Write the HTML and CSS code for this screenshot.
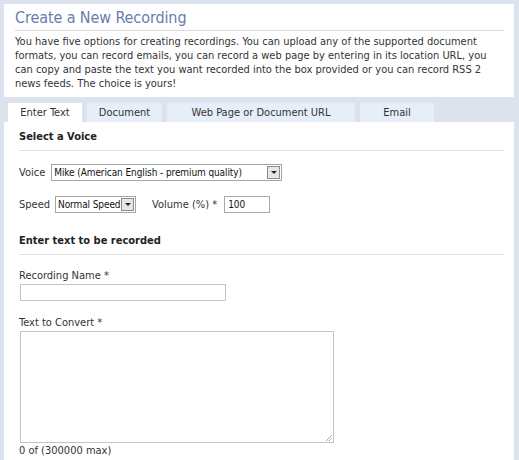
FILE: index.html
```html
<!DOCTYPE html>
<html>
<head>
<meta charset="utf-8">
<link rel="stylesheet" href="styles.css">
</head>
<body>
<div class="page">
  <section class="intro">
    <h1 class="title">Create a New Recording</h1>
    <p class="lead">You have five options for creating recordings. You can upload any of the supported document formats, you can record emails, you can record a web page by entering in its location URL, you can copy and paste the text you want recorded into the box provided or you can record RSS 2 news feeds. The choice is yours!</p>
  </section>
  <nav class="tabs">
    <div class="tab active t1">Enter Text</div>
    <div class="tab t2">Document</div>
    <div class="tab t3">Web Page or Document URL</div>
    <div class="tab t4">Email</div>
  </nav>
  <section class="panel">
    <h2 class="section-title">Select a Voice</h2>
    <div class="row voice-row">
      <span class="label">Voice</span>
      <div class="select voice-select"><span class="sel-text">Mike (American English - premium quality)</span><span class="sel-btn"><span class="tri"></span></span></div>
    </div>
    <div class="row speed-row">
      <span class="label speed-label">Speed</span>
      <div class="select speed-select"><span class="sel-text">Normal Speed</span><span class="sel-btn"><span class="tri"></span></span></div>
      <span class="label vol-label">Volume (%) *</span>
      <div class="input vol-input">100</div>
    </div>
    <h2 class="section-title second">Enter text to be recorded</h2>
    <div class="field-label name-label">Recording Name *</div>
    <div class="input name-input"></div>
    <div class="field-label text-label">Text to Convert *</div>
    <div class="textarea"><svg class="grip" width="9" height="9" viewBox="0 0 9 9"><path d="M8 2 L2 8 M8 5 L5 8" stroke="#aaa" stroke-width="1"/></svg></div>
    <div class="counter">0 of (300000 max)</div>
  </section>
</div>
</body>
</html>
```
FILE: styles.css
```css
html, body { margin: 0; padding: 0; }
body {
  background: #dce3ef;
  font-family: "DejaVu Sans Condensed", "DejaVu Sans", Verdana, sans-serif;
  font-size: 11px;
  color: #333;
  width: 519px;
  height: 460px;
  overflow: hidden;
}
.page { padding: 4px 5px 0 4px; }
.intro {
  background: #fff;
  padding: 5px 10px 8px 11px;
  height: 80px;
}
.title {
  margin: 0;
  font-size: 16px;
  font-weight: normal;
  color: #6a7cae;
  line-height: 18px;
  padding-bottom: 3px;
  border-bottom: 1px solid #dcdcdc;
  letter-spacing: -0.1px;
}
.lead {
  margin: 4px 0 0 0;
  line-height: 14px;
  color: #333;
}
.tabs {
  display: flex;
  margin-top: 6px;
  height: 19px;
  padding-left: 4px;
  gap: 5px;
}
.tab {
  background: #e5eef9;
  text-align: center;
  line-height: 19px;
  color: #333;
}
.tab.active { background: #fff; }
.t1 { width: 74px; }
.t2 { width: 75px; }
.t3 { width: 188px; }
.t4 { width: 74px; }
.panel {
  background: #fff;
  padding: 8px 10px 20px 15px;
  height: 329px;
}
.section-title {
  margin: 0;
  font-size: 11px;
  font-weight: bold;
  color: #222;
  line-height: 14px;
  padding-bottom: 6px;
  border-bottom: 1px solid #e2e2e2;
}
.section-title.second { margin-top: 21px; }
.row { display: flex; align-items: center; }
.voice-row { margin-top: 13px; height: 17px; }
.speed-row { margin-top: 15px; height: 17px; }
.label { margin-right: 6px; }
.speed-label { margin-right: 5px; }
.select {
  display: flex;
  border: 1px solid #a5a5a5;
  height: 15px;
  box-sizing: content-box;
  background: #fff;
}
.sel-text {
  flex: 1;
  line-height: 15px;
  padding-left: 2px;
  color: #111;
  white-space: nowrap;
  overflow: hidden;
  font-size: 10px;
  letter-spacing: -0.1px;
}
.sel-btn {
  flex: none;
  width: 11px;
  height: 11px;
  margin: 1px 1px 0 0;
  border: 1px solid #8c8c8c;
  background: #e6e6e6;
  display: flex;
  align-items: center;
  justify-content: center;
}
.tri {
  width: 0; height: 0;
  border-left: 3px solid transparent;
  border-right: 3px solid transparent;
  border-top: 3px solid #222;
}
.voice-select { width: 229px; }
.speed-select { width: 79px; }
.vol-label { margin-left: 16px; margin-right: 7px; }
.input {
  border: 1px solid #a9a9a9;
  background: #fff;
  box-sizing: border-box;
}
.vol-input { width: 46px; height: 17px; line-height: 15px; padding-left: 3px; color: #111; font-size: 10px; }
.field-label { line-height: 14px; }
.name-label { margin-top: 14px; }
.name-input { width: 206px; height: 17px; margin-top: 1px; margin-left: 1px; border-color: #c4c4c4; }
.text-label { margin-top: 15px; }
.textarea {
  position: relative;
  width: 314px;
  height: 112px;
  margin-top: 1px;
  margin-left: 1px;
  border: 1px solid #c4c4c4;
  box-sizing: border-box;
}
.grip { position: absolute; right: 0; bottom: 0; }
.counter { margin-top: 1px; line-height: 14px; }
```
